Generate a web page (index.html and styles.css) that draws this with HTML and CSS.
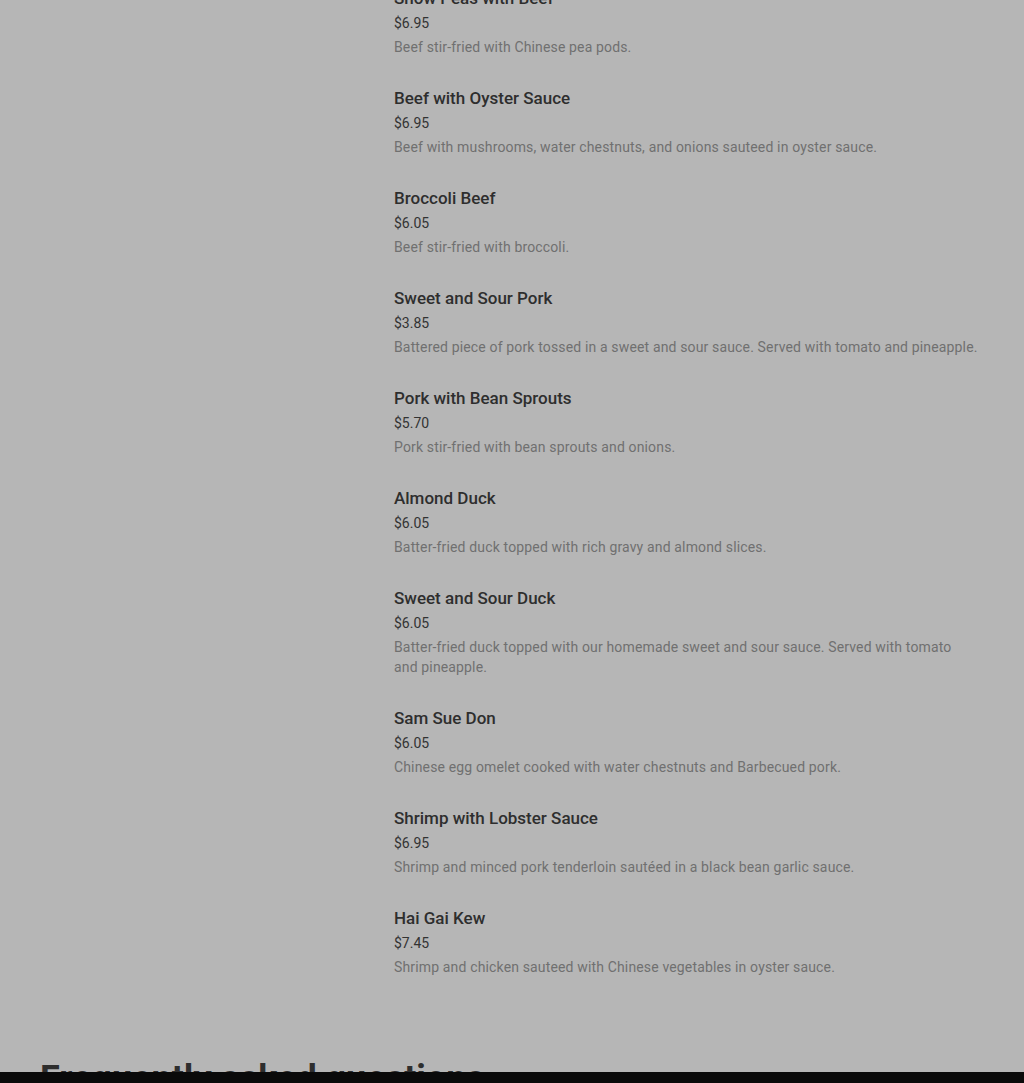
FILE: index.html
```
<!DOCTYPE html>
<html lang="en">
<head>
    <meta charset="UTF-8">
    <meta name="viewport" content="width=device-width, initial-scale=1.0">
    <title>Menu</title>
    <link rel="stylesheet" href="styles.css">
</head>
<body>
    <div class="page">
        <div class="menu-layout">
            <aside class="sidebar"></aside>
            <section class="menu-list">
                <div class="item">
                    <h3 class="item-name">Snow Peas with Beef</h3>
                    <p class="item-price">$6.95</p>
                    <p class="item-desc">Beef stir-fried with Chinese pea pods.</p>
                </div>
                <div class="item">
                    <h3 class="item-name">Beef with Oyster Sauce</h3>
                    <p class="item-price">$6.95</p>
                    <p class="item-desc">Beef with mushrooms, water chestnuts, and onions sauteed in oyster sauce.</p>
                </div>
                <div class="item">
                    <h3 class="item-name">Broccoli Beef</h3>
                    <p class="item-price">$6.05</p>
                    <p class="item-desc">Beef stir-fried with broccoli.</p>
                </div>
                <div class="item">
                    <h3 class="item-name">Sweet and Sour Pork</h3>
                    <p class="item-price">$3.85</p>
                    <p class="item-desc">Battered piece of pork tossed in a sweet and sour sauce. Served with tomato and pineapple.</p>
                </div>
                <div class="item">
                    <h3 class="item-name">Pork with Bean Sprouts</h3>
                    <p class="item-price">$5.70</p>
                    <p class="item-desc">Pork stir-fried with bean sprouts and onions.</p>
                </div>
                <div class="item">
                    <h3 class="item-name">Almond Duck</h3>
                    <p class="item-price">$6.05</p>
                    <p class="item-desc">Batter-fried duck topped with rich gravy and almond slices.</p>
                </div>
                <div class="item">
                    <h3 class="item-name">Sweet and Sour Duck</h3>
                    <p class="item-price">$6.05</p>
                    <p class="item-desc">Batter-fried duck topped with our homemade sweet and sour sauce. Served with tomato and pineapple.</p>
                </div>
                <div class="item">
                    <h3 class="item-name">Sam Sue Don</h3>
                    <p class="item-price">$6.05</p>
                    <p class="item-desc">Chinese egg omelet cooked with water chestnuts and Barbecued pork.</p>
                </div>
                <div class="item">
                    <h3 class="item-name">Shrimp with Lobster Sauce</h3>
                    <p class="item-price">$6.95</p>
                    <p class="item-desc">Shrimp and minced pork tenderloin sautéed in a black bean garlic sauce.</p>
                </div>
                <div class="item">
                    <h3 class="item-name">Hai Gai Kew</h3>
                    <p class="item-price">$7.45</p>
                    <p class="item-desc">Shrimp and chicken sauteed with Chinese vegetables in oyster sauce.</p>
                </div>
            </section>
        </div>

        <section class="faq">
            <h2>Frequently asked questions</h2>
        </section>
    </div>

    <div class="bottom-bar"></div>
</body>
</html>
```

FILE: styles.css
```
body {
    margin: 0;
    font-family: Roboto, "Liberation Sans", sans-serif;
    background-color: #b6b6b6;
    color: #2e2e2e;
}
.page {
    padding: 0 40px;
    margin-top: -14px;
}
.menu-layout {
    display: flex;
}
.sidebar {
    width: 354px;
    flex-shrink: 0;
}
.menu-list {
    flex: 1;
    max-width: 584px;
}
.item {
    padding-bottom: 29px;
}
.item-name {
    margin: 0;
    font-size: 17px;
    line-height: 24px;
    font-weight: 500;
    color: #2e2e2e;
}
.item-price {
    margin: 3px 0 0;
    font-size: 14px;
    line-height: 20px;
    color: #333;
}
.item-desc {
    margin: 4px 0 0;
    font-size: 14px;
    line-height: 20px;
    letter-spacing: 0.15px;
    color: #707070;
}
.faq {
    padding-top: 51px;
}
.faq h2 {
    margin: 0;
    font-size: 36px;
    line-height: 44px;
    font-weight: 700;
    color: #2e2e2e;
}
.bottom-bar {
    position: fixed;
    left: 0;
    right: 0;
    bottom: 0;
    height: 11px;
    background-color: #0a0a0a;
}
```
